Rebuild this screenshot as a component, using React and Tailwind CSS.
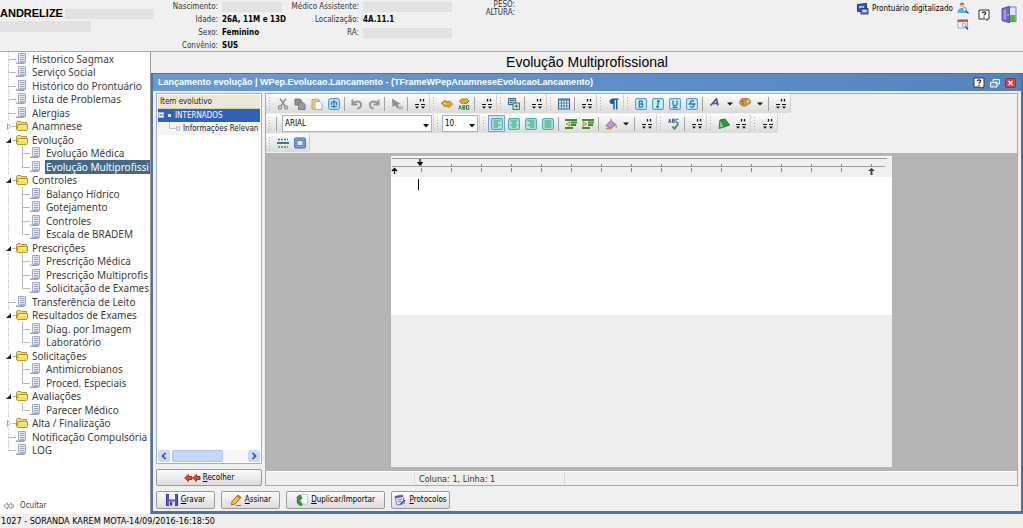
const tree = [
    { label: 'Historico Sagmax' },
    { label: 'Serviço Social' },
    { label: 'Histórico do Prontuário' },
    { label: 'Lista de Problemas' },
    { label: 'Alergias' },
    { label: 'Anamnese', folder: true },
    { label: 'Evolução', folder: true, open: true },
    { label: 'Evolução Médica', child: true },
    { label: 'Evolução Multiprofissi', child: true, last: true, selected: true },
    { label: 'Controles', folder: true, open: true },
    { label: 'Balanço Hídrico', child: true },
    { label: 'Gotejamento', child: true },
    { label: 'Controles', child: true },
    { label: 'Escala de BRADEM', child: true, last: true },
    { label: 'Prescrições', folder: true, open: true },
    { label: 'Prescrição Médica', child: true },
    { label: 'Prescrição Multiprofis', child: true },
    { label: 'Solicitação de Exames', child: true, last: true },
    { label: 'Transferência de Leito' },
    { label: 'Resultados de Exames', folder: true, open: true },
    { label: 'Diag. por Imagem', child: true },
    { label: 'Laboratório', child: true, last: true },
    { label: 'Solicitações', folder: true, open: true },
    { label: 'Antimicrobianos', child: true },
    { label: 'Proced. Especiais', child: true, last: true },
    { label: 'Avaliações', folder: true, open: true },
    { label: 'Parecer Médico', child: true, last: true },
    { label: 'Alta / Finalização', folder: true },
    { label: 'Notificação Compulsória' },
    { label: 'LOG', end: true },
]

function DocIcon() {
    return (
        <svg className="h-3 w-3 shrink-0" viewBox="0 0 12 12">
            <path d="M2.500 .5H9.500V9.500H2.500Z" fill="#e9ecf6" stroke="#a3abc0" />
            <path d="M.5 10.500H8.500M.5 9V10.500" stroke="#9aa2b6" />
            <path d="M4 2.500H8.500M4 4.500H8.500M4 6.500H8.500M4 8.300H8.500" stroke="#8f9ac0" strokeWidth=".9" />
        </svg>
    )
}

function FolderIcon() {
    return (
        <svg className="h-3 w-3 shrink-0" viewBox="0 0 12 12">
            <path d="M.5 9.500V2.500L1.500 1.500H4.500L5.500 2.500H10.500V4" fill="#f2dc6a" stroke="#a88a22" strokeWidth=".9" />
            <path d="M2.500 4.500H11.500V9.500L10.500 10.500H1.500L.5 9.500Z" fill="#f6e064" stroke="#a88a22" strokeWidth=".9" />
            <path d="M3 5.800H10.500" stroke="#fffbd8" />
        </svg>
    )
}

function Guides({ node }) {
    if (node.child) {
        return (
            <svg className="h-3.5 w-[30px] shrink-0" viewBox="0 0 30 14">
                <path d="M8.500 0V14" stroke="#c4c4c4" strokeDasharray="1 1" />
                <path d={node.last ? 'M22.500 0V7.500H30' : 'M22.500 0V14M22.500 7.500H30'} fill="none" stroke="#b9b9b9" />
            </svg>
        )
    }
    return (
        <svg className="h-3.5 w-4 shrink-0" viewBox="0 0 16 14">
            <path d={node.end ? 'M8.500 0V7' : 'M8.500 0V14'} stroke="#c4c4c4" strokeDasharray="1 1" />
            <path d="M8.500 7.500H16" stroke="#b9b9b9" />
            {node.folder && <path d="M6 2H12V12H6Z" fill="#fff" />}
            {node.folder && !node.open && <path d="M7.500 4.500L10.500 7.500L7.500 10.500Z" fill="#fff" stroke="#a5a5a5" />}
            {node.open && <path d="M11 5V10H6Z" fill="#222" />}
        </svg>
    )
}

function Sidebar() {
    return (
        <nav className="flex w-[151px] shrink-0 flex-col overflow-hidden border-r border-[#9a9a9a] bg-white">
            <ul className="font-['Noto_Sans',sans-serif] text-[10px] text-[#3c3c3c]">
                {tree.map((node, i) => (
                    <li key={i} className="flex items-center odd:h-[13px] even:h-[14px]">
                        <Guides node={node} />
                        {node.folder ? <FolderIcon /> : <DocIcon />}
                        <a
                            href="#"
                            className={
                                node.selected
                                    ? 'ml-[3px] grow bg-[#3f6a88] px-px leading-[14px] whitespace-nowrap text-white'
                                    : 'ml-[3px] px-px leading-[14px] whitespace-nowrap'
                            }
                        >
                            {node.label}
                        </a>
                    </li>
                ))}
            </ul>
            <button className="mt-auto mb-[2px] flex items-center gap-1.5 px-[3px] text-[8px] leading-3 text-[#444]">
                <svg className="h-2 w-[11px]" viewBox="0 0 11 8" fill="#eee" stroke="#888" strokeWidth=".8">
                    <path d="M4.500 .8L.8 4L4.500 7.200V5.200H6V2.800H4.500Z" />
                    <path d="M8.500 .8L5 4L8.500 7.200V5.200H10.500V2.800H8.500Z" />
                </svg>
                Ocultar
            </button>
        </nav>
    )
}

function HelpIcon() {
    return (
        <svg className="h-3 w-3" viewBox="0 0 12 12">
            <path d="M1 1H11V10H9.500L9 11.500L7.500 10H1Z" fill="#fff" stroke="#333" />
            <path d="M4.300 4.200C4.300 2.300 7.700 2.300 7.700 4.200C7.700 5.300 6 5.200 6 6.600M6 7.600V8.800" fill="none" stroke="#222" strokeWidth="1.200" />
        </svg>
    )
}

function Header() {
    return (
        <header className="flex h-[52px] border-b border-[#a8a8a8] bg-[#f0f0f0] text-[#333]">
            <div className="w-[170px] pt-2">
                <div className="flex items-center">
                    <strong className="w-[65px] font-['Liberation_Sans',sans-serif] text-[11px] leading-[11px] text-black">ANDRELIZE</strong>
                    <span className="h-[10px] w-[89px] bg-[#e2e2e2]" />
                </div>
                <div className="mt-[2px] h-[11px] w-[91px] bg-[#e2e2e2]" />
            </div>
            <dl className="grid grid-cols-[48px_60px] auto-rows-[13px] items-center gap-x-1 leading-[13px] whitespace-nowrap">
                <dt className="text-right">Nascimento:</dt>
                <dd className="h-[10px] bg-[#e2e2e2]" />
                <dt className="text-right">Idade:</dt>
                <dd className="font-bold text-black">26A, 11M e 13D</dd>
                <dt className="text-right">Sexo:</dt>
                <dd className="font-bold text-black">Feminino</dd>
                <dt className="text-right">Convênio:</dt>
                <dd className="font-bold text-black">SUS</dd>
            </dl>
            <dl className="grid grid-cols-[77px_89px] auto-rows-[13px] items-center gap-x-1 leading-[13px] whitespace-nowrap">
                <dt className="text-right">Médico Assistente:</dt>
                <dd className="h-[10px] bg-[#e2e2e2]" />
                <dt className="text-right">Localização:</dt>
                <dd className="font-bold text-black">4A.11.1</dd>
                <dt className="text-right">RA:</dt>
                <dd className="h-[10px] bg-[#e2e2e2]" />
            </dl>
            <dl className="w-[63px] pt-px text-right leading-[8px]">
                <dt>PESO:</dt>
                <dt>ALTURA:</dt>
            </dl>
            <div className="ml-auto flex items-start">
                <button className="mt-[3px] flex items-center gap-[3px] leading-3 text-black">
                    <svg className="h-3 w-3" viewBox="0 0 12 12">
                        <path d="M.5 1.500L9.500 .5V8L.5 8.500Z" fill="#3b59c4" stroke="#22347c" />
                        <path d="M2 3H7V5H2Z" fill="#9db8f5" />
                        <path d="M4 5.500H11V11H4Z" fill="#5f7cd0" stroke="#2c3f86" />
                        <path d="M5.500 7H9.500V9H5.500Z" fill="#e6ecfa" />
                    </svg>
                    Prontuário digitalizado
                </button>
                <div className="ml-1 flex flex-col gap-1 pt-0.5">
                    <button aria-label="Paciente">
                        <svg className="block h-3 w-3" viewBox="0 0 12 12">
                            <path d="M.5 11C.5 7 3 6 5 6S9.500 7 9.500 11Z" fill="#58aee0" />
                            <circle cx="5" cy="3" r="2.300" fill="#e9bd8f" />
                            <path d="M2.700 2.500C3 0 7 0 7.300 2.500Z" fill="#8a6a45" />
                            <circle cx="7.500" cy="7.500" r="2" fill="#d8effa" stroke="#4a86b0" strokeWidth=".8" />
                            <path d="M9 9L11.500 11.500" stroke="#335" strokeWidth="1.300" />
                        </svg>
                    </button>
                    <button aria-label="Agenda">
                        <svg className="block h-3 w-3" viewBox="0 0 12 12">
                            <path d="M1 2H10.500V10H1Z" fill="#fff" stroke="#9aa6c4" />
                            <path d="M.5 1.500H11V4H.5Z" fill="#d4534f" />
                            <circle cx="7" cy="7" r="2" fill="#e6f0fa" stroke="#7d93b8" strokeWidth=".8" />
                            <path d="M8.500 8.500L11 11.500" stroke="#446" strokeWidth="1.200" />
                        </svg>
                    </button>
                </div>
                <button aria-label="Ajuda" className="mt-[9px] ml-[9px]">
                    <HelpIcon />
                </button>
                <button aria-label="Sair" className="mt-1.5 mr-[6px] ml-[11px]">
                    <svg className="h-[17px] w-4" viewBox="0 0 16 17">
                        <path d="M6 1H15V15.500H6Z" fill="#dcebfa" stroke="#7080a8" />
                        <path d="M9 9H14.500V15H9Z" fill="#5fb04c" />
                        <path d="M1 2.500L8.500 .5V16.800L1 14.500Z" fill="#7468c2" stroke="#4b4490" strokeWidth=".8" />
                        <path d="M2.500 4L5 3.400V14L2.500 13.500Z" fill="#a59be2" />
                        <circle cx="7" cy="9" r=".8" fill="#f4e48a" />
                    </svg>
                </button>
            </div>
        </header>
    )
}

function ToolGroup({ children }) {
    return (
        <div className="flex h-full items-center rounded-r-xs border-r border-[#cfcfcf] bg-linear-to-b from-[#fdfdfd] to-[#dadada] pr-px">
            <svg className="h-[15px] w-2" viewBox="0 0 8 15">
                <path d="M3.500 1V15" stroke="#b0b0b0" strokeDasharray="1 2" />
            </svg>
            {children}
        </div>
    )
}

function Tool({ label, active, children }) {
    return (
        <button
            aria-label={label}
            className={
                active
                    ? 'flex h-[17px] w-[17px] items-center justify-center border border-[#7da2ce] bg-[#cfe0f7]'
                    : 'flex h-[17px] w-[17px] items-center justify-center'
            }
        >
            <svg className="h-3 w-3 shrink-0" viewBox="0 0 12 12" fill="none">
                {children}
            </svg>
        </button>
    )
}

function Sep() {
    return <span className="mr-[3px] ml-[2px] h-[14px] w-px bg-[#a2a2a2]" />
}

function More() {
    return (
        <Tool label="Mais botões">
            <path d="M6.500 1V3.500M9.500 1V3.500" stroke="#111" strokeWidth="1.300" />
            <path d="M1 6.500H5M7 6.500H11" stroke="#111" />
            <path d="M1 8.500H5L3 10.800ZM7 8.500H11L9 10.800Z" fill="#111" />
        </Tool>
    )
}

function Arrow() {
    return (
        <button aria-label="Opções" className="flex h-4 w-[13px] items-center justify-center">
            <svg className="h-1 w-1.5" viewBox="0 0 6 4">
                <path d="M0 .5H6L3 3.500Z" fill="#111" />
            </svg>
        </button>
    )
}

function Combo({ label, value, className }) {
    return (
        <div className={className}>
            <select aria-label={label} className="h-full w-full appearance-none border border-[#9fb4cc] bg-white pl-[2px] text-[8px] leading-3 text-black">
                <option>{value}</option>
            </select>
            <svg className="pointer-events-none absolute top-1/2 right-[3px] h-1 w-1.5" viewBox="0 0 6 4">
                <path d="M0 0H6L3 3.500Z" fill="#111" />
            </svg>
        </div>
    )
}

function FormatTool({ label, d }) {
    return (
        <Tool label={label}>
            <rect x=".6" y=".6" width="10.800" height="10.800" rx="1.500" fill="#d3edf9" stroke="#4c9fca" strokeWidth="1.100" />
            <path d={d} stroke="#2a78b4" strokeWidth="1.300" />
        </Tool>
    )
}

function AlignTool({ label, d, active }) {
    return (
        <Tool label={label} active={active}>
            <rect x=".6" y=".6" width="10.800" height="10.800" rx="1.500" fill="#b9e6dc" stroke="#4fa9b8" strokeWidth="1.100" />
            <path d={d} stroke="#2a9a66" strokeWidth="1.200" />
        </Tool>
    )
}

function Toolbars() {
    return (
        <div className="flex flex-col gap-px bg-[#f0f0f0] pb-px">
            <div className="flex h-[19px]">
                <ToolGroup>
                    <Tool label="Recortar">
                        <path d="M3 .5L8 8M9 .5L4 8" stroke="#8a8a8a" strokeWidth="1.400" />
                        <circle cx="3" cy="9.500" r="1.600" stroke="#8a8a8a" strokeWidth="1.200" />
                        <circle cx="9" cy="9.500" r="1.600" stroke="#8a8a8a" strokeWidth="1.200" />
                    </Tool>
                    <Tool label="Copiar">
                        <path d="M1 1H6L7.500 2.500V7H1Z" fill="#8f8f8f" stroke="#777" />
                        <path d="M4.500 4.500H9L11 6.500V11.500H4.500Z" fill="#9c9c9c" stroke="#777" />
                    </Tool>
                    <Tool label="Colar">
                        <path d="M1 1.500H8V11H1Z" fill="#f1cf79" stroke="#c29a3c" />
                        <path d="M3 .5H6.500V2.500H3Z" fill="#bbb" />
                        <path d="M4 3.500H9L11 5.500V11.500H4Z" fill="#f7fbff" stroke="#8fb0cc" />
                    </Tool>
                    <Tool label="Localizar">
                        <rect x=".6" y=".6" width="10.800" height="10.800" rx="2" fill="#bfe0f2" stroke="#3f8fc0" />
                        <path d="M6 2V10M3.500 4H8.500M3 8.500H9M3.500 4V7M8.500 4V7" stroke="#2d76ac" strokeWidth="1.200" />
                    </Tool>
                    <Sep />
                    <Tool label="Desfazer">
                        <path d="M1.500 1.500V6.500H6.500M2 6C4 2.500 10.500 2.500 10 7C9.800 9 8 10.500 6 10.500" stroke="#949494" strokeWidth="2" />
                    </Tool>
                    <Tool label="Refazer">
                        <path d="M10.500 1.500V6.500H5.500M10 6C8 2.500 1.500 2.500 2 7C2.200 9 4 10.500 6 10.500" stroke="#949494" strokeWidth="2" />
                    </Tool>
                    <Sep />
                    <Tool label="Selecionar">
                        <path d="M1 .5L9.500 6L6.500 6.800L8 10L6 10.500L4.500 7.500L1.500 9Z" fill="#8e8e8e" />
                        <path d="M7 9H12M8 11H12" stroke="#999" />
                    </Tool>
                    <Sep />
                    <More />
                </ToolGroup>
                <ToolGroup>
                    <Tool label="Procurar">
                        <path d="M.5 5L4 2.500L6 4L8.500 3L11.500 6L8 9.500L5.500 8L3.500 8.500Z" fill="#e2ac31" stroke="#8f6512" strokeWidth=".8" />
                        <path d="M3 5L5 6.500" stroke="#fff0b8" />
                    </Tool>
                    <Tool label="Substituir">
                        <path d="M1.500 3L4 .5L6 1.500L8.500 .5L11 3L8 6L5.500 5L3.500 5.500Z" fill="#e2ac31" stroke="#8f6512" strokeWidth=".8" />
                        <path d="M.7 11.500L2 7.500L3.300 11.500M4.800 7.500V11.300H6.800V7.500H4.800M8.500 7.500V11.300H10.800V7.500H8.500M4.800 9.500H6.800" stroke="#2e7a3c" />
                    </Tool>
                    <Sep />
                    <More />
                </ToolGroup>
                <ToolGroup>
                    <Tool label="Inserir objeto">
                        <rect x=".6" y=".6" width="7" height="6" fill="#a9cdec" stroke="#2c64a0" />
                        <rect x="5" y="5" width="6.400" height="6.400" fill="#d5f0d6" stroke="#2f7d4a" />
                        <path d="M2 2.500H6M2 4.500H4M6.500 8H10M8.300 6.500V10" stroke="#2d6d8a" />
                    </Tool>
                    <Sep />
                    <More />
                </ToolGroup>
                <ToolGroup>
                    <Tool label="Tabela">
                        <rect x=".5" y="1" width="11" height="10" fill="#e6f2fb" stroke="#2d5f8c" />
                        <path d="M.5 2H11.500" stroke="#2d5f8c" />
                        <path d="M.5 5H11.500M.5 8H11.500M3.500 1V11M6 1V11M8.700 1V11" stroke="#4680ad" strokeWidth=".9" />
                    </Tool>
                    <Sep />
                    <More />
                </ToolGroup>
                <ToolGroup>
                    <Tool label="Marcas de parágrafo">
                        <path d="M6 1H4C.8 1 .8 6 4 6H6Z" fill="#1d5f96" />
                        <path d="M6 1V11.500M8.700 1V11.500M4 1.300H10.500" stroke="#1d5f96" strokeWidth="1.400" />
                    </Tool>
                </ToolGroup>
                <ToolGroup>
                    <FormatTool label="Negrito" d="M4.200 3V9H6.500C8.500 9 8.500 6 6.500 6H4.200H6C8 6 8 3 6 3H4" />
                    <FormatTool label="Itálico" d="M5 3H8M4 9H7M6.600 3L5.400 9" />
                    <FormatTool label="Sublinhado" d="M4 2.500V6C4 8.300 8 8.300 8 6V2.500M3.500 9.500H8.500" />
                    <FormatTool label="Tachado" d="M8 3.500C7 2.300 4.200 2.500 4.200 4.300C4.200 6 8 5.800 8 7.700C8 9.500 5 9.700 4 8.400M2.500 6H9.500" />
                    <Sep />
                    <Tool label="Cor da fonte">
                        <path d="M1.500 7.500L7.500 1L9 7.500M3.500 5.500H8.500" stroke="#5a4a9c" strokeWidth="1.700" />
                    </Tool>
                    <Arrow />
                    <Tool label="Cor de fundo">
                        <path d="M6 0C9.500 0 11.700 2 11.500 4.500C11.300 6.500 9 5.500 8 7C7.200 8.500 5 8.500 3 7.500C-1 5.500 .5 0 6 0Z" fill="#d39a52" stroke="#8d5f28" strokeWidth=".7" />
                        <circle cx="3.500" cy="3" r="1" fill="#d33" />
                        <circle cx="6.500" cy="2" r="1" fill="#3a8" />
                        <circle cx="9" cy="3.500" r="1" fill="#fe6" />
                        <circle cx="4" cy="5.700" r="1" fill="#48c" />
                    </Tool>
                    <Arrow />
                    <Sep />
                    <More />
                </ToolGroup>
            </div>
            <div className="flex h-[19px]">
                <ToolGroup>
                    <Sep />
                    <Combo label="Fonte" value="ARIAL" className="relative ml-[2px] h-[17px] w-[150px]" />
                </ToolGroup>
                <ToolGroup>
                    <Combo label="Tamanho" value="10" className="relative h-[17px] w-9" />
                </ToolGroup>
                <ToolGroup>
                    <AlignTool label="Alinhar à esquerda" active d="M2.500 3H9.500M2.500 5H7M2.500 7H9.500M2.500 9H7" />
                    <AlignTool label="Centralizar" d="M2.500 3H9.500M3.800 5H8.200M2.500 7H9.500M3.800 9H8.200" />
                    <AlignTool label="Alinhar à direita" d="M2.500 3H9.500M5 5H9.500M2.500 7H9.500M5 9H9.500" />
                    <AlignTool label="Justificar" d="M2.500 3H9.500M2.500 5H9.500M2.500 7H9.500M2.500 9H9.500" />
                    <Sep />
                    <Tool label="Diminuir recuo">
                        <path d="M0 2H12M6 4.500H12M6 7H11M0 10H8" stroke="#3f8c2c" strokeWidth="1.900" />
                        <path d="M5 3.500L1 6L5 8.500Z" fill="#e8d04a" stroke="#8c7a12" strokeWidth=".6" />
                    </Tool>
                    <Tool label="Aumentar recuo">
                        <path d="M0 2H12M6 4.500H12M6 7H11M0 10H8" stroke="#3f8c2c" strokeWidth="1.900" />
                        <path d="M1 3.500L5 6L1 8.500Z" fill="#e8d04a" stroke="#8c7a12" strokeWidth=".6" />
                    </Tool>
                    <Sep />
                    <Tool label="Preenchimento">
                        <path d="M1 7.500L6 2.500L10.500 6.500L6 10.500Z" fill="#b79bd0" stroke="#6d5690" strokeWidth=".8" />
                        <path d="M6 2.500V.5M9 5.500C11 6 11.500 8 11 10" stroke="#d08d3a" strokeWidth="1.300" />
                        <path d="M1 10.500H6" stroke="#d08d3a" strokeWidth="1.500" />
                    </Tool>
                    <Arrow />
                    <Sep />
                    <More />
                </ToolGroup>
                <ToolGroup>
                    <Tool label="Verificar ortografia">
                        <path d="M.5 5L1.800 1L3 5M1 3.600H2.800M4.500 1V4.500H6.300V1H4.500M4.500 2.700H6.300M10.500 1.200H8V4.500H10.500" stroke="#3a4a8c" strokeWidth=".9" />
                        <path d="M4.500 8.500L6.500 10.800L10.500 5.500" stroke="#2c9a3a" strokeWidth="1.800" />
                    </Tool>
                    <Sep />
                    <More />
                </ToolGroup>
                <ToolGroup>
                    <Tool label="Dicionário">
                        <path d="M2 2L7 1L11.500 7L6 9Z" fill="#2f9a3c" stroke="#17611f" strokeWidth=".8" />
                        <path d="M2 2L1 10.500L6 9" fill="#7cc984" stroke="#17611f" strokeWidth=".8" />
                    </Tool>
                    <More />
                </ToolGroup>
                <ToolGroup>
                    <More />
                </ToolGroup>
            </div>
            <div className="flex h-[18px]">
                <ToolGroup>
                    <Tool label="Espaçamento">
                        <path d="M0 6H12" stroke="#256b8c" strokeWidth="1.800" />
                        <path d="M1 2.500H11M1 10H11" stroke="#3f8c4c" strokeWidth="1.500" strokeDasharray="2 1" />
                    </Tool>
                    <Tool label="Moldura">
                        <rect x=".7" y="1" width="10.600" height="10" rx="1" fill="#7ea6e4" stroke="#3b62ae" />
                        <rect x="3" y="3.500" width="6" height="5" fill="#dfeaff" stroke="#3b62ae" strokeWidth=".7" />
                    </Tool>
                </ToolGroup>
            </div>
        </div>
    )
}

function Ruler() {
    return (
        <svg className="block h-[21px] w-full bg-[#f0f0f0]" viewBox="0 0 501 21" preserveAspectRatio="xMinYMin slice">
            <path d="M1 2.500H496M1 10.500H494" stroke="#9c9c9c" />
            <path d="M1 .5H501" stroke="#fff" />
            {Array.from({ length: 16 }, (_, i) => (
                <path key={i} d={`M${30.5 + i * 30} 8V11M${30.5 + i * 30} 12V16`} stroke="#858585" />
            ))}
            <path d="M29 3V6.500M26.500 6L29 9L31.500 6" fill="#111" stroke="#111" strokeWidth="1.300" />
            <path d="M3.500 18V14.500M1 15L3.500 12.500L6 15" fill="#111" stroke="#111" strokeWidth="1.300" />
            <path d="M480.500 12L484 15H481.500V19H479.500V15H477Z" fill="#444" />
        </svg>
    )
}

function Editor() {
    return (
        <section className="ml-[3px] flex min-w-0 grow flex-col border border-[#a9a9a9]">
            <Toolbars />
            <div className="flex grow flex-col items-center bg-[#b4b4b4] px-2 pt-[3px] pb-1">
                <div className="flex w-full max-w-[501px] grow flex-col bg-[#eeeeee]">
                    <Ruler />
                    <div className="flex h-[138px] bg-white pl-[27px]">
                        <span className="mt-0.5 h-[11px] w-px bg-black" />
                        <textarea aria-label="Texto da evolução" className="grow resize-none p-1 text-[10px] outline-none" />
                    </div>
                </div>
            </div>
            <div className="flex h-[14px] items-center border-t border-white bg-[#f1eeee] text-[9px] leading-3 text-[#333]">
                <span className="w-[148px]" />
                <span className="w-[150px] border-l border-[#e0dcdc] pl-1">Coluna: 1, Linha: 1</span>
                <span className="h-full border-l border-[#dcd8d8]" />
            </div>
        </section>
    )
}

function EvolutionList() {
    return (
        <section className="flex w-[106px] shrink-0 flex-col">
            <div className="flex grow flex-col border border-[#9fb0c4] bg-white p-px">
                <h3 className="h-[14px] border-b border-[#d0ccb8] bg-[#ebe8d8] px-[2px] leading-[14px]">Item evolutivo</h3>
                <ul className="whitespace-nowrap">
                    <li className="flex h-[13px] items-center bg-[#2f63b7] text-white">
                        <svg className="mr-1 h-[13px] w-[13px] shrink-0" viewBox="0 0 13 13">
                            <rect x=".5" y="3.500" width="5" height="5" fill="#fff" stroke="#9db4dc" />
                            <path d="M1.500 6H4.500" stroke="#234" />
                            <rect x="10" y="5" width="3" height="3" fill="#cfe0fa" />
                        </svg>
                        INTERNADOS
                    </li>
                    <li className="flex h-[13px] items-center bg-[#f4f4f4]">
                        <svg className="mr-[3px] h-[13px] w-[22px] shrink-0" viewBox="0 0 22 13">
                            <path d="M11.500 0V6.500H18" fill="none" stroke="#c0c0c0" />
                            <rect x="18.500" y="5" width="3" height="3" fill="#fff" stroke="#b8b8b8" />
                        </svg>
                        Informações Relevan
                    </li>
                </ul>
                <div className="mt-auto flex h-3 bg-[#f6f6f6]">
                    <button aria-label="Rolar à esquerda" className="flex w-3 items-center justify-center rounded-xs bg-[#c9dafb]">
                        <svg className="h-2 w-2" viewBox="0 0 8 8">
                            <path d="M5.500 1L2.500 4L5.500 7" fill="none" stroke="#2c4f9e" strokeWidth="1.700" />
                        </svg>
                    </button>
                    <span className="ml-[2px] w-[51px] rounded-xs border border-[#aac3f3] bg-[#c5d7fb]" />
                    <button aria-label="Rolar à direita" className="ml-auto flex w-3 items-center justify-center rounded-xs bg-[#c9dafb]">
                        <svg className="h-2 w-2" viewBox="0 0 8 8">
                            <path d="M2.500 1L5.500 4L2.500 7" fill="none" stroke="#2c4f9e" strokeWidth="1.700" />
                        </svg>
                    </button>
                </div>
            </div>
            <button className="mt-[5px] flex h-[17px] items-center justify-center gap-0.5 rounded-xs border border-[#9a9a9a] bg-linear-to-b from-[#fafafa] to-[#dcdcdc] text-black">
                <svg className="h-2 w-[17px]" viewBox="0 0 17 8" fill="#e0452c" stroke="#8f1f12" strokeWidth=".8">
                    <path d="M4.500 .5L.7 4L4.500 7.500V5.500H8V2.500H4.500Z" />
                    <path d="M12.500 .5L8.700 4L12.500 7.500V5.500H16V2.500H12.500Z" />
                </svg>
                <span><u>R</u>ecolher</span>
            </button>
        </section>
    )
}

function ActionButton({ className, icon, children }) {
    return (
        <button className={`flex h-[18px] items-center justify-center gap-[3px] rounded-xs border border-[#9a9a9a] bg-linear-to-b from-[#fbfbfb] to-[#dcdcdc] whitespace-nowrap text-black ${className}`}>
            <svg className="h-3 w-3 shrink-0" viewBox="0 0 12 12">{icon}</svg>
            <span>{children}</span>
        </button>
    )
}

function Actions() {
    return (
        <div className="mt-[5px] flex">
            <ActionButton
                className="w-[59px]"
                icon={
                    <>
                        <path d="M.5 .5H11.500V11.500H.5Z" fill="#5a55b8" stroke="#38347f" />
                        <path d="M3 0H9V5.500H3Z" fill="#f2f2fa" />
                        <path d="M3 7.500H9V12H3Z" fill="#d8d8ea" />
                        <path d="M4 8H6V11.500H4Z" fill="#38347f" />
                    </>
                }
            >
                <u>G</u>ravar
            </ActionButton>
            <ActionButton
                className="ml-1.5 w-[59px]"
                icon={
                    <>
                        <path d="M2 7.500L8 1L11 3.500L5 10L1.500 11Z" fill="#f5c542" stroke="#93600f" strokeWidth=".9" />
                        <path d="M8 1L11 3.500L10 4.800L7 2.200Z" fill="#e0574a" />
                        <path d="M6 11.500H11" stroke="#777" />
                    </>
                }
            >
                <u>A</u>ssinar
            </ActionButton>
            <ActionButton
                className="ml-1.5 w-[99px]"
                icon={
                    <>
                        <path d="M5 .5H11.500V10H5Z" fill="#fff" stroke="#c4c4c4" />
                        <path d="M6 11.500C1 11.500 0 7 2 3.500L.5 3.500L4 .8L6 4.500H4.500C3.300 7 4 9 6 9.500Z" fill="#2f9a3c" stroke="#17611f" strokeWidth=".6" />
                    </>
                }
            >
                <u>D</u>uplicar/Importar
            </ActionButton>
            <ActionButton
                className="ml-1.5 w-[59px]"
                icon={
                    <>
                        <path d="M1 2.500L8.500 1L10.500 9.500L3 11Z" fill="#eef0fb" stroke="#7d80a8" />
                        <path d="M1 3.500L8.500 2" stroke="#5c56b4" strokeWidth="2" />
                        <path d="M3.500 6L8 5M4 8L7 7.400" stroke="#7d80a8" />
                        <path d="M6 10.500L11 6" stroke="#3a4a8c" strokeWidth="1.500" />
                    </>
                }
            >
                <u>P</u>rotocolos
            </ActionButton>
        </div>
    )
}

export default function App() {
    return (
        <div className="flex min-h-screen flex-col bg-[#f0f0f0] font-['DejaVu_Sans_Condensed','DejaVu_Sans',sans-serif] text-[8px] text-[#222]">
            <Header />
            <div className="flex grow">
                <Sidebar />
                <main className="flex min-w-0 grow flex-col">
                    <h1 className="h-[21px] text-center font-['Liberation_Sans',sans-serif] text-[14px] leading-[21px] text-black">
                        Evolução Multiprofissional
                    </h1>
                    <div className="flex grow flex-col border-x-2 border-b-3 border-[#4d74a0] bg-[#f0f0f0]">
                        <div className="flex h-[18px] shrink-0 items-center border-t border-[#4d74a0] bg-linear-to-r from-[#6a9ad6] to-[#5584bd] pr-1 pl-[5px] font-bold text-white">
                            <h2 className="grow font-['Liberation_Sans',sans-serif] text-[9px]">Lançamento evolução | WPep.Evolucao.Lancamento - (TFrameWPepAnamneseEvolucaoLancamento)</h2>
                            <div className="flex items-center gap-1">
                                <button aria-label="Ajuda"><HelpIcon /></button>
                                <button aria-label="Restaurar">
                                    <svg className="block h-3 w-3" viewBox="0 0 12 12">
                                        <path d="M4 2.500H10.500V7H4Z" fill="#6d9ad0" stroke="#fff" />
                                        <path d="M1.500 5.500H8V10H1.500Z" fill="#6d9ad0" stroke="#fff" />
                                    </svg>
                                </button>
                                <button aria-label="Fechar">
                                    <svg className="block h-3 w-3" viewBox="0 0 12 12">
                                        <rect x=".5" y="1.500" width="10" height="9" rx="1" fill="#cf4650" stroke="#9a2a38" />
                                        <path d="M3.500 4L7.500 8M7.500 4L3.500 8" stroke="#fff" strokeWidth="1.400" />
                                    </svg>
                                </button>
                            </div>
                        </div>
                        <div className="flex grow flex-col px-[3px] pt-0.5 pb-[2px]">
                            <div className="flex grow">
                                <EvolutionList />
                                <Editor />
                            </div>
                            <Actions />
                        </div>
                    </div>
                </main>
            </div>
            <footer className="h-[14px] bg-[#f1eeec] px-px text-[9px] leading-[15px] text-black">
                1027 - SORANDA KAREM MOTA-14/09/2016-16:18:50
            </footer>
        </div>
    )
}
